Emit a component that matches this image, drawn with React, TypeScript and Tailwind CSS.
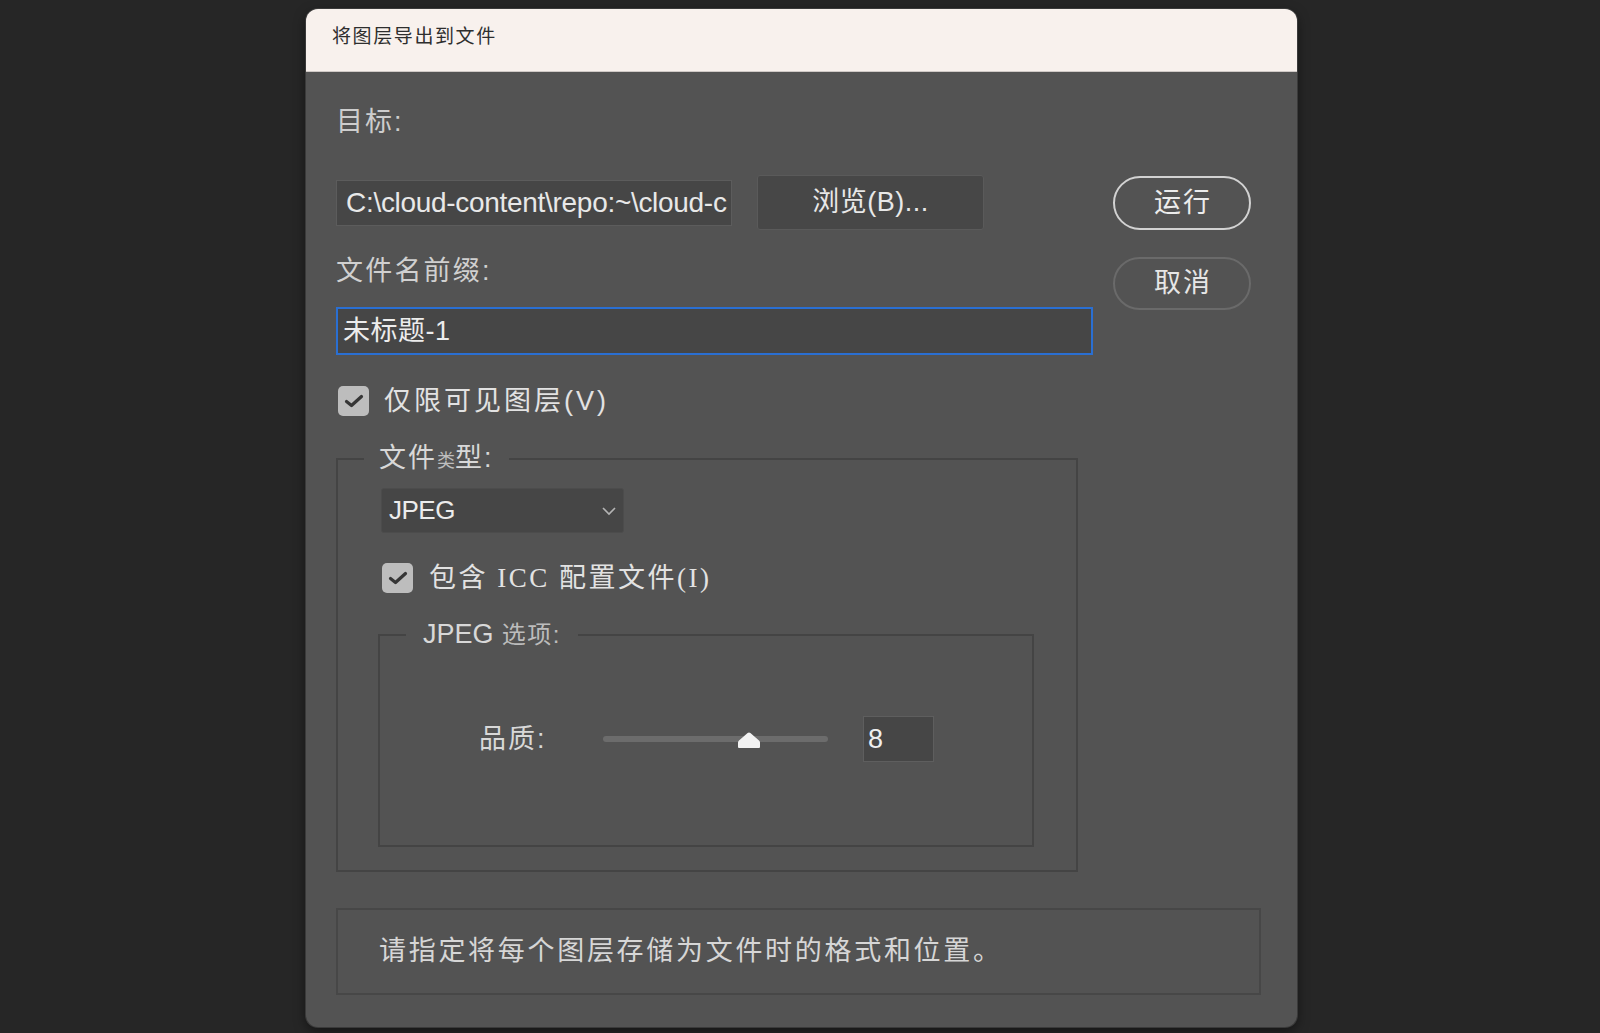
import React from "react";

function CheckBox() {
  return (
    <div className="w-[31px] h-[30px] rounded-[5px] bg-[#bdbdbd] flex items-center justify-center shrink-0">
      <svg width="22" height="16" viewBox="0 0 22 16">
        <path d="M3.5 8.5 L8.5 12.5 L18.5 3.5" fill="none" stroke="#363636" strokeWidth="3.2" strokeLinecap="round" strokeLinejoin="round" />
      </svg>
    </div>
  );
}

export default function App() {
  return (
    <div className="min-h-[1033px] w-full bg-[#262626] pt-[9px] pl-[306px] font-['Liberation_Sans','Noto_Sans_CJK_SC',sans-serif]">
      <div className="w-[991px] h-[1018px] rounded-[12px] bg-[#535353] shadow-[0_0_0_1px_#3a3a3a,0_4px_12px_rgba(0,0,0,0.5)] flex flex-col overflow-hidden">
        <div className="h-[63px] shrink-0 bg-[#f8f1ed] pl-[26px] pt-[16px] text-[19px] leading-[24px] tracking-[1.6px] text-[#2e2e2e] border-b border-[#cfc9c6]">
          将图层导出到文件
        </div>
        <div className="flex flex-col pl-[30px] pt-[35px]">
          <div className="flex">
            <div className="w-[757px] flex flex-col">
              <div className="text-[27px] leading-[30px] tracking-[2px] text-[#cdcdcd]">目标:</div>
              <div className="mt-[38px] h-[55px] flex items-center gap-[25px]">
                <div className="w-[396px] h-[46px] bg-[#464646] border border-[#5c5c5c] pl-[9px] flex items-center overflow-hidden whitespace-nowrap text-[28px] tracking-[-0.3px] text-[#e8e8e8]">
                  {"C:\\cloud-content\\repo:~\\cloud-c"}
                </div>
                <div className="w-[227px] h-[55px] bg-[#474747] border border-[#5a5a5a] rounded-[3px] flex items-center justify-center text-[27px] tracking-[0.5px] text-[#e8e8e8]">
                  浏览(B)...
                </div>
              </div>
              <div className="mt-[26px] text-[27px] leading-[30px] tracking-[2.2px] text-[#d0d0d0]">文件名前缀:</div>
              <div className="mt-[21px] h-[48px] w-[757px] bg-[#464646] border-2 border-[#2a6fd2] pl-[5px] flex items-center text-[27px] tracking-[0.5px] text-[#ececec]">
                未标题-1
              </div>
              <div className="mt-[31px] h-[30px] flex items-center gap-[15px] ml-[2px]">
                <CheckBox />
                <span className="text-[27px] leading-[30px] tracking-[3px] text-[#e2e2e2]">仅限可见图层(V)</span>
              </div>
              <div className="mt-[42px] w-[742px] relative border-2 border-[#444444] pl-[40px] pt-[28px] pb-[23px]">
                <span className="absolute left-[26px] top-[-17px] px-[15px] bg-[#535353] text-[27px] leading-[30px] tracking-[2px] text-[#d8d8d8]">
                  文件<span className="text-[18px] tracking-[0px] text-[#bdbdbd]">类</span>型:
                </span>
                <div className="ml-[3px] w-[243px] h-[45px] rounded-[3px] bg-[#464646] border border-[#4c4c4c] pl-[7px] pr-[6px] flex items-center justify-between">
                  <span className="text-[26px] tracking-[-0.5px] text-[#ececec]">JPEG</span>
                  <svg width="16" height="10" viewBox="0 0 16 10">
                    <path d="M2 2 L8 8 L14 2" fill="none" stroke="#b4b4b4" strokeWidth="1.6" />
                  </svg>
                </div>
                <div className="mt-[30px] ml-[4px] h-[30px] flex items-center gap-[16px]">
                  <CheckBox />
                  <span className="text-[27px] leading-[30px] tracking-[2.5px] text-[#e2e2e2] font-['Liberation_Serif','Noto_Sans_CJK_SC',serif]">包含 ICC 配置文件(I)</span>
                </div>
                <div className="mt-[41px] w-[656px] relative border-2 border-[#444444] pt-[80px] pb-[83px] pl-[99px]">
                  <span className="absolute left-[26px] top-[-17px] px-[17px] bg-[#535353] leading-[30px] text-[#d8d8d8] whitespace-nowrap">
                    <span className="text-[27px]">JPEG</span>
                    <span className="text-[24px] tracking-[1.5px] text-[#bcbcbc]"> 选项:</span>
                  </span>
                  <div className="h-[46px] flex items-center">
                    <div className="w-[124px] text-[27px] leading-[30px] tracking-[2px] text-[#d8d8d8]">品质:</div>
                    <div className="relative w-[225px] h-[6px] rounded-full bg-[#6c6c6c]">
                      <svg className="absolute left-[135px] top-[-4px]" width="22" height="16" viewBox="0 0 22 16">
                        <path d="M9.6 1.1 Q11 0 12.4 1.1 L21 8.5 Q22 9.3 22 10.5 L22 15 Q22 16 21 16 L1 16 Q0 16 0 15 L0 10.5 Q0 9.3 1 8.5 Z" fill="#f2f2f2" />
                      </svg>
                    </div>
                    <div className="ml-[35px] w-[71px] h-[46px] bg-[#464646] border border-[#5e5e5e] pl-[4px] flex items-center text-[27px] text-[#efefef]">
                      8
                    </div>
                  </div>
                </div>
              </div>
            </div>
            <div className="ml-[20px] pt-[69px] flex flex-col">
              <div className="w-[138px] h-[54px] rounded-full border-2 border-[#d2d2d2] flex items-center justify-center text-[27px] tracking-[2px] pl-[2px] text-[#ececec]">
                运行
              </div>
              <div className="mt-[27px] w-[138px] h-[53px] rounded-full border-2 border-[#6a6a6a] flex items-center justify-center text-[27px] tracking-[2px] pl-[2px] text-[#e6e6e6]">
                取消
              </div>
            </div>
          </div>
          <div className="mt-[36px] w-[925px] h-[87px] border-2 border-[#474747] pl-[41px] flex items-center text-[27px] tracking-[2.7px] text-[#d6d6d6]">
            请指定将每个图层存储为文件时的格式和位置。
          </div>
        </div>
      </div>
    </div>
  );
}
